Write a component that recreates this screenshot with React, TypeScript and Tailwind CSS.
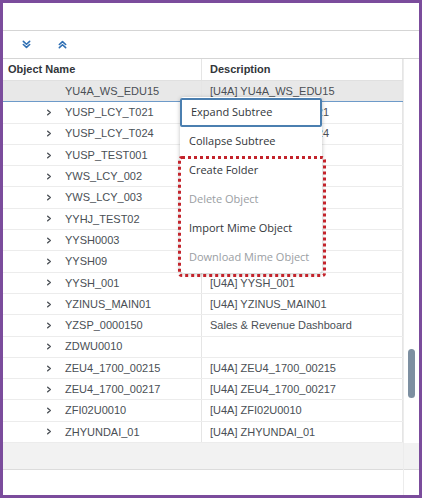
import React from 'react';

const rows: { name: string; desc: string }[] = [
  { name: 'YUSP_LCY_T021', desc: '[U4A] YUSP_LCY_T021' },
  { name: 'YUSP_LCY_T024', desc: '[U4A] YUSP_LCY_T024' },
  { name: 'YUSP_TEST001', desc: '' },
  { name: 'YWS_LCY_002', desc: '' },
  { name: 'YWS_LCY_003', desc: '' },
  { name: 'YYHJ_TEST02', desc: '' },
  { name: 'YYSH0003', desc: '' },
  { name: 'YYSH09', desc: '' },
  { name: 'YYSH_001', desc: '[U4A] YYSH_001' },
  { name: 'YZINUS_MAIN01', desc: '[U4A] YZINUS_MAIN01' },
  { name: 'YZSP_0000150', desc: 'Sales & Revenue Dashboard' },
  { name: 'ZDWU0010', desc: '' },
  { name: 'ZEU4_1700_00215', desc: '[U4A] ZEU4_1700_00215' },
  { name: 'ZEU4_1700_00217', desc: '[U4A] ZEU4_1700_00217' },
  { name: 'ZFI02U0010', desc: '[U4A] ZFI02U0010' },
  { name: 'ZHYUNDAI_01', desc: '[U4A] ZHYUNDAI_01' },
];

const menu = [
  { label: 'Expand Subtree', disabled: false },
  { label: 'Collapse Subtree', disabled: false },
  { label: 'Create Folder', disabled: false },
  { label: 'Delete Object', disabled: true },
  { label: 'Import Mime Object', disabled: false },
  { label: 'Download Mime Object', disabled: true },
];

const DoubleChevron = ({ up }: { up?: boolean }) => (
  <svg width="9" height="9" viewBox="0 0 10 10" fill="none" stroke="#2f6fb3" strokeWidth="1.8" strokeLinecap="round" strokeLinejoin="round">
    {up ? (
      <>
        <path d="M1.5 5 L5 1.8 L8.5 5" />
        <path d="M1.5 8.5 L5 5.3 L8.5 8.5" />
      </>
    ) : (
      <>
        <path d="M1.5 1.5 L5 4.7 L8.5 1.5" />
        <path d="M1.5 5 L5 8.2 L8.5 5" />
      </>
    )}
  </svg>
);

const Arrow = () => (
  <svg width="6" height="7" viewBox="0 0 6 8" fill="none" stroke="#4a4f55" strokeWidth="1.6" strokeLinecap="round" strokeLinejoin="round">
    <path d="M1.5 1.5 L4.5 4 L1.5 6.5" />
  </svg>
);

export default function App() {
  return (
    <div className="w-[422px] h-[498px] bg-white border-[3px] border-[#7b4c9c] flex flex-col text-[11px] text-[#32363a] relative" style={{ fontFamily: '"Liberation Sans", Arial, sans-serif' }}>
      <div className="h-[28px] border-b border-[#d5d5d5] shrink-0" />
      <div className="h-[28px] border-b border-[#d5d5d5] shrink-0 flex items-center pl-[19px] gap-[27px]">
        <DoubleChevron />
        <DoubleChevron up />
      </div>
      <div className="flex flex-1 min-h-0">
        <div className="w-[400px] flex flex-col">
          <div className="h-[22px] flex border-b border-[#e0e0e0] font-bold text-[#32363a]">
            <div className="w-[199px] border-r border-[#e5e5e5] flex items-center pl-[5px]">Object Name</div>
            <div className="flex-1 flex items-center pl-[8px] border-r border-[#e5e5e5]">Description</div>
          </div>
          <div className="h-[21.3px] flex bg-[#e8e8e8] border-b border-[#6d9ac9] text-[#4a4f55]">
            <div className="w-[199px] flex items-center pl-[62px] border-r border-[#e5e5e5]">YU4A_WS_EDU15</div>
            <div className="flex-1 flex items-center pl-[8px] border-r border-[#e5e5e5]">[U4A] YU4A_WS_EDU15</div>
          </div>
          {rows.map((r) => (
            <div key={r.name} className="h-[21.3px] flex border-b border-[#ececec] text-[#4a4f55]">
              <div className="w-[199px] flex items-center pl-[43px] border-r border-[#e5e5e5]">
                <span className="w-[19px] flex items-center"><Arrow /></span>
                {r.name}
              </div>
              <div className="flex-1 flex items-center pl-[8px] border-r border-[#e5e5e5]">{r.desc}</div>
            </div>
          ))}
          <div className="flex-1 bg-[#f2f2f2] border-b border-[#dcdcdc] mt-[0px] w-[416px]" />
          <div className="h-[25px] w-[416px]" />
        </div>
        <div className="w-[16px] border-l border-[#ececec] relative">
          <div className="absolute left-[4px] top-[290px] w-[7px] h-[49px] rounded-full bg-[#7d8fa1]" />
        </div>
      </div>

      <div className="absolute left-[177px] top-[94px] w-[142px] bg-white rounded-[4px] shadow-[0_1px_4px_rgba(0,0,0,0.25)] py-[1px]" style={{ fontFamily: '"Open Sans", sans-serif' }}>
        {menu.map((m, i) => (
          <div
            key={m.label}
            className={`h-[29px] flex items-center pl-[9px] text-[11px] ${m.disabled ? 'text-[#9a9ea3]' : 'text-[#32363a]'} ${i === 0 ? 'border-2 border-[#4b7fb0] rounded-[2px] pl-[7px]' : ''}`}
          >
            {m.label}
          </div>
        ))}
      </div>
      <div className="absolute left-[175px] top-[153px] w-[148px] h-[121px] border-[3px] border-dotted border-[#c3232b] rounded-[4px]" />
    </div>
  );
}
